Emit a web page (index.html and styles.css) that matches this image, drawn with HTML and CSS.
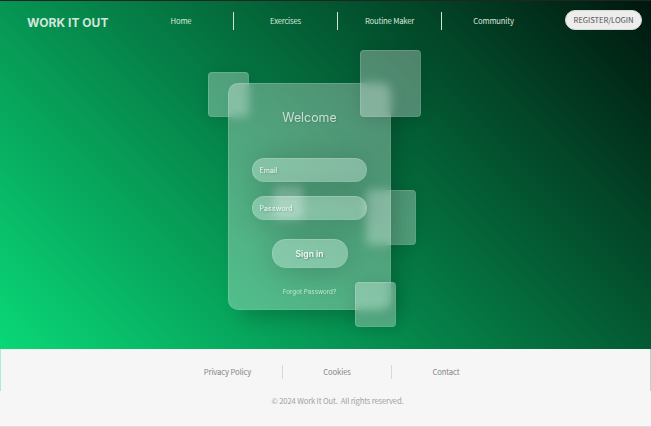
FILE: index.html
```html
<!DOCTYPE html>
<html lang="en">
<head>
<meta charset="utf-8">
<title>Work It Out</title>
<link rel="stylesheet" href="styles.css">
</head>
<body>
<div class="backdrop"></div>
<div class="page">
  <header class="header">
    <div class="logo">WORK IT OUT</div>
    <nav class="nav">
      <a>Home</a>
      <a>Exercises</a>
      <a>Routine Maker</a>
      <a>Community</a>
    </nav>
    <a class="register">REGISTER/LOGIN</a>
  </header>
  <main class="main">
    <div class="stage">
      <span class="square square-left"></span>
      <span class="square square-right"></span>
      <span class="square square-inner"></span>
      <form class="card">
        <h1>Welcome</h1>
        <div class="field"><span>Email</span></div>
        <div class="field"><span>Password</span></div>
        <div class="submit"><span>Sign in</span></div>
        <a class="forgot">Forgot Password?</a>
      </form>
      <span class="square square-top"></span>
      <span class="square square-bottom"></span>
    </div>
  </main>
  <footer class="footer">
    <div class="footer-links">
      <a>Privacy Policy</a>
      <a>Cookies</a>
      <a>Contact</a>
    </div>
    <p>© 2024 Work It Out.&nbsp; All rights reserved.</p>
  </footer>
</div>
</body>
</html>
```
FILE: styles.css
```css
* { box-sizing: border-box; }
body {
  margin: 0;
  width: 651px;
  height: 427px;
  overflow: hidden;
  background: #f5f5f5;
  font-family: "Noto Sans CJK JP", "Noto Sans", sans-serif;
}
.backdrop {
  position: absolute;
  top: 0;
  left: 0;
  width: 651px;
  height: 391px;
  border-top: 1px solid #202523;
  background: linear-gradient(45deg, #0ae07c, #00170e) border-box;
}
.page {
  position: relative;
  display: flex;
  flex-direction: column;
  height: 427px;
}
.header {
  display: flex;
  height: 50px;
  padding: 10px 9px 0 27px;
}
.logo {
  width: 102px;
  padding-top: 5px;
  font: 700 11.1px/16px Inter, sans-serif;
  letter-spacing: 0.05px;
  transform: scaleX(1.08);
  transform-origin: left;
  color: #d5e5dc;
  white-space: nowrap;
}
.nav {
  display: grid;
  grid-template-columns: repeat(4, 104px);
  height: 18px;
  margin-top: 2px;
  font-size: 7.7px;
  letter-spacing: -0.2px;
  line-height: 18px;
  color: #d9e8df;
  text-align: center;
}
.nav a + a { border-left: 1px solid #d0e3d8; }
.register {
  width: 77px;
  height: 20px;
  margin-left: auto;
  border: 1px solid #d6dbd8;
  border-radius: 10px;
  background: #ededed;
  font-size: 7.7px;
  letter-spacing: -0.1px;
  line-height: 18px;
  color: #505050;
  text-align: center;
}
.main { height: 299px; padding: 33px 0 0 228px; }
.stage { position: relative; width: 163px; height: 227px; }
.card, .square {
  border: 1px solid rgba(255,255,255,.08);
  border-top-color: rgba(255,255,255,.14);
  border-left-color: rgba(255,255,255,.14);
  background: rgba(255,255,255,.3);
  backdrop-filter: blur(5px);
}
.card {
  position: relative;
  display: flex;
  flex-direction: column;
  align-items: center;
  width: 163px;
  height: 227px;
  border-radius: 10px;
  box-shadow: 10px 10px 20px -3px rgba(0,0,0,.2);
  font-family: Inter, sans-serif;
}
.card h1 {
  margin: 26px 0 32px;
  font-size: 12.4px;
  line-height: 16px;
  font-weight: 400;
  color: rgba(255,255,255,.7);
  text-shadow: 1px 1px 2px rgba(0,0,0,.15);
}
.field {
  width: 115px;
  height: 24px;
  margin-bottom: 14px;
  padding-left: 6.5px;
  border: 1px solid rgba(255,255,255,.06);
  border-top-color: rgba(255,255,255,.16);
  border-left-color: rgba(255,255,255,.16);
  border-radius: 12px;
  background: rgba(255,255,255,.3);
  box-shadow: 2px 2px 30px rgba(0,0,0,.2);
  font-size: 7px;
  letter-spacing: 0.1px;
  line-height: 24px;
  color: #f1f8f4;
  text-shadow: 1px 1px 2px rgba(0,0,0,.25);
}
.submit {
  width: 76px;
  height: 29px;
  margin: 5px 0 0;
  border: 1px solid rgba(255,255,255,.06);
  border-top-color: rgba(255,255,255,.14);
  border-left-color: rgba(255,255,255,.14);
  border-radius: 14px;
  background: rgba(255,255,255,.3);
  box-shadow: 2px 2px 30px rgba(0,0,0,.2);
  font-size: 8.5px;
  font-weight: 600;
  line-height: 28px;
  color: #f4faf6;
  text-align: center;
  text-shadow: 1px 1px 2px rgba(0,0,0,.3);
}
.forgot {
  margin-top: 19px;
  font-size: 6.3px;
  line-height: 10px;
  color: rgba(255,255,255,.65);
}
.square { position: absolute; border-radius: 4px; box-shadow: 1px 1px 15px rgba(0,0,0,.1); }
.square-left { left: -20px; top: -11px; width: 41px; height: 45px; }
.square-right { left: 138px; top: 107px; width: 50px; height: 55px; }
.square-inner { left: 46px; top: 103px; width: 29px; height: 34px; }
.square-top { left: 132px; top: -33px; width: 61px; height: 67px; }
.square-bottom { left: 127px; top: 199px; width: 41px; height: 45px; }
.footer {
  height: 78px;
  padding-top: 16px;
  border: solid #dedede;
  border-width: 0 0 1px;
  background: linear-gradient(#aeeccf, #aeeccf) 0 0 / 1px 42px no-repeat,
    linear-gradient(#b5d6c6, #b5d6c6) 100% 0 / 1px 42px no-repeat, #f6f6f6;
}
.footer-links {
  display: grid;
  grid-template-columns: repeat(3, 109px);
  height: 13px;
  margin-left: 173px;
  font-size: 7.7px;
  letter-spacing: -0.15px;
  line-height: 14px;
  color: #858585;
  text-align: center;
}
.footer-links a + a { border-left: 1px solid #d9d9d9; }
.footer p {
  width: 327px;
  margin: 16px 0 0 174px;
  font-size: 7.7px;
  letter-spacing: -0.18px;
  line-height: 14px;
  color: #a2a2a2;
  text-align: center;
}
```
